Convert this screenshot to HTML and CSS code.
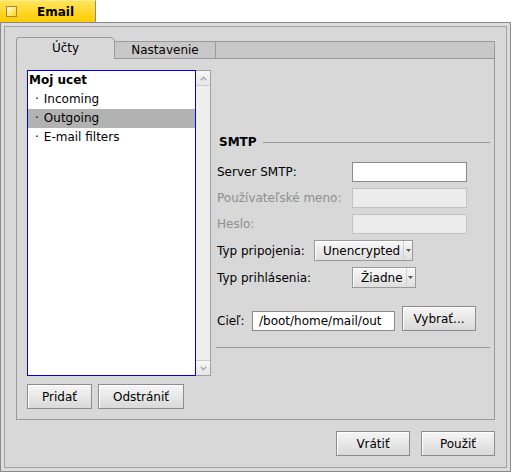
FILE: index.html
```html
<!DOCTYPE html>
<html>
<head>
<meta charset="utf-8">
<link rel="stylesheet" href="styles.css">
</head>
<body>
<div class="titletab"><span class="zoombox"></span><span class="title">Email</span></div>
<div class="window">
  <div class="content">
    <div class="tabview">
      <div class="tabstrip">
        <div class="tab active">Účty</div>
        <div class="tab inactive">Nastavenie</div>
        <div class="tabfill"></div>
      </div>
      <div class="tabbody">
        <div class="leftcol">
          <div class="listbox">
            <div class="list">
              <div class="item account">Moj ucet</div>
              <div class="item sub"><span class="dot">·</span>Incoming</div>
              <div class="item sub selected"><span class="dot">·</span>Outgoing</div>
              <div class="item sub"><span class="dot">·</span>E-mail filters</div>
            </div>
            <div class="scrollbar">
              <div class="sarrow up"><svg width="7" height="5" viewBox="0 0 7 5"><polyline points="0.8,4.2 3.5,1.3 6.2,4.2" fill="none" stroke="#a8a8a8" stroke-width="1.4"/></svg></div>
              <div class="sarrow down"><svg width="7" height="5" viewBox="0 0 7 5"><polyline points="0.8,0.8 3.5,3.7 6.2,0.8" fill="none" stroke="#a8a8a8" stroke-width="1.4"/></svg></div>
            </div>
          </div>
          <div class="btnrow">
            <button class="btn">Pridať</button>
            <button class="btn">Odstrániť</button>
          </div>
        </div>
        <div class="rightcol">
          <div class="heading"><span class="htext">SMTP</span><span class="rule"></span></div>
          <div class="form">
            <div class="row"><span class="lbl">Server SMTP:</span><span class="field"></span></div>
            <div class="row"><span class="lbl disabled">Používateľské meno:</span><span class="field disabled"></span></div>
            <div class="row"><span class="lbl disabled">Heslo:</span><span class="field disabled"></span></div>
            <div class="row"><span class="lbl auto">Typ pripojenia:</span><span class="menu"><span class="mtext">Unencrypted</span><span class="marrow"><svg width="5" height="3" viewBox="0 0 5 3"><polygon points="0,0 5,0 2.5,3" fill="#555"/></svg></span></span></div>
            <div class="row"><span class="lbl">Typ prihlásenia:</span><span class="menu"><span class="mtext">Žiadne</span><span class="marrow"><svg width="5" height="3" viewBox="0 0 5 3"><polygon points="0,0 5,0 2.5,3" fill="#555"/></svg></span></span></div>
            <div class="row cilrow"><span class="cillbl-wrap"><span class="lbl short">Cieľ:</span><span class="field path">/boot/home/mail/out</span></span><button class="btn wide pick">Vybrať...</button></div>
          </div>
          <div class="sep"></div>
        </div>
      </div>
    </div>
    <div class="footer">
      <button class="btn wide">Vrátiť</button>
      <button class="btn wide">Použiť</button>
    </div>
  </div>
</div>
</body>
</html>
```

FILE: styles.css
```css
html, body {
  margin: 0;
  padding: 0;
}
body {
  width: 511px;
  height: 472px;
  overflow: hidden;
  background: #ffffff;
  font-family: "DejaVu Sans", sans-serif;
  font-size: 12px;
  color: #000;
}

.titletab {
  width: 96px;
  height: 22px;
  box-sizing: border-box;
  border-right: 1px solid #8c8c8c;
  border-top: 1px solid #ffec8a;
  background: linear-gradient(#ffe45a, #ffcb00);
  display: flex;
  align-items: center;
}
.zoombox {
  width: 11px;
  height: 11px;
  box-sizing: border-box;
  margin-left: 6px;
  border: 1px solid #a68a2a;
  background: linear-gradient(135deg, #fffbe2, #ffd419);
}
.title {
  font-weight: bold;
  margin-left: 20px;
}

.window {
  height: 450px;
  box-sizing: border-box;
  border: 1px solid #8a8a8a;
  padding: 3px;
  background: #dcdcdc;
}
.content {
  height: 100%;
  box-sizing: border-box;
  border: 1px solid #a2a2a2;
  background: #d8d8d8;
  padding: 10px 11px 11px 11px;
  display: flex;
  flex-direction: column;
}

.tabview {
  flex: 1;
  display: flex;
  flex-direction: column;
  margin-bottom: 11px;
}
.tabstrip {
  display: flex;
  height: 22px;
}
.tab {
  box-sizing: border-box;
  text-align: center;
}
.tab.active {
  width: 99px;
  height: 22px;
  border: 1px solid #9a9a9a;
  border-bottom: none;
  border-radius: 3px 5px 0 0;
  background: #d9d9d9;
  line-height: 20px;
}
.tab.inactive {
  width: 101px;
  height: 18px;
  margin-top: 4px;
  border: 1px solid #9a9a9a;
  border-left: none;
  background: #c8c8c8;
  line-height: 16px;
}
.tabfill {
  flex: 1;
  height: 18px;
  margin-top: 4px;
  box-sizing: border-box;
  border: 1px solid #9a9a9a;
  border-left: none;
  background: #c8c8c8;
}
.tabbody {
  flex: 1;
  box-sizing: border-box;
  border: 1px solid #9a9a9a;
  border-top: none;
  padding: 11px 4px 10px 10px;
  display: grid;
  grid-template-columns: 184px 274px;
  column-gap: 5px;
}

.leftcol {
  display: flex;
  flex-direction: column;
}
.listbox {
  flex: 1;
  display: flex;
}
.list {
  flex: 1;
  border: 1px solid #0000f0;
  background: #ffffff;
}
.item {
  height: 19px;
  line-height: 19px;
  padding-left: 1px;
  white-space: nowrap;
}
.item.account {
  font-weight: bold;
}
.item.sub {
  padding-left: 7px;
}
.item.selected {
  background: #b2b2b2;
}
.dot {
  margin-right: 5px;
}
.scrollbar {
  width: 15px;
  box-sizing: border-box;
  border: 1px solid #a0a0a0;
  border-left: none;
  background: #eeeeee;
  display: flex;
  flex-direction: column;
  justify-content: space-between;
}
.sarrow {
  height: 14px;
  display: flex;
  align-items: center;
  justify-content: center;
  background: linear-gradient(#f8f8f8, #e6e6e6);
}
.sarrow.up {
  border-bottom: 1px solid #cdcdcd;
}
.sarrow.down {
  border-top: 1px solid #cdcdcd;
}
.btnrow {
  display: flex;
  gap: 6px;
  margin-top: 8px;
}

.btn {
  height: 25px;
  box-sizing: border-box;
  border: 1px solid #8c8c8c;
  border-radius: 0;
  background: linear-gradient(#f6f6f6, #d9d9d9);
  box-shadow: inset 1px 1px 0 #ffffff;
  font-family: "DejaVu Sans", sans-serif;
  font-size: 12px;
  color: #000;
  padding: 0 14px;
  margin: 0;
}
.btn.wide {
  min-width: 74px;
}

.rightcol {
  display: flex;
  flex-direction: column;
  padding-top: 64px;
}
.heading {
  display: flex;
  align-items: center;
  height: 16px;
  padding-left: 3px;
}
.htext {
  font-weight: bold;
}
.rule {
  flex: 1;
  height: 1px;
  background: #9a9a9a;
  margin-left: 6px;
}
.form {
  margin-top: 12px;
  display: flex;
  flex-direction: column;
  gap: 6px;
}
.row {
  display: flex;
  align-items: center;
  padding-left: 1px;
}
.lbl {
  width: 135px;
  white-space: nowrap;
}
.lbl.disabled {
  color: #8e8e8e;
}
.lbl.auto {
  width: auto;
  margin-right: 9px;
}
.lbl.short {
  width: 35px;
}
.field {
  width: 115px;
  height: 20px;
  box-sizing: border-box;
  border: 1px solid #8a8a8a;
  background: #ffffff;
}
.field.disabled {
  background: #ececec;
  border-color: #c2c2c2;
}
.field.path {
  width: 143px;
  padding-left: 6px;
  line-height: 18px;
  white-space: nowrap;
}
.menu {
  height: 21px;
  box-sizing: border-box;
  border: 1px solid #9a9a9a;
  background: linear-gradient(#f8f8f8, #dedede);
  box-shadow: inset 1px 1px 0 #ffffff;
  display: flex;
  align-items: center;
  padding-left: 8px;
}
.marrow {
  width: 9px;
  height: 100%;
  margin-left: 3px;
  box-sizing: border-box;
  border-left: 1px solid #cfcfcf;
  display: flex;
  align-items: center;
  justify-content: center;
}
.cilrow {
  margin-top: 12px;
  align-items: flex-end;
}
.cillbl-wrap {
  display: flex;
  align-items: center;
}
.btn.pick {
  margin-left: 7px;
  padding: 0 9px;
}
.sep {
  height: 1px;
  background: #9a9a9a;
  margin-top: 16px;
}

.footer {
  display: flex;
  justify-content: flex-end;
  gap: 11px;
}
```
